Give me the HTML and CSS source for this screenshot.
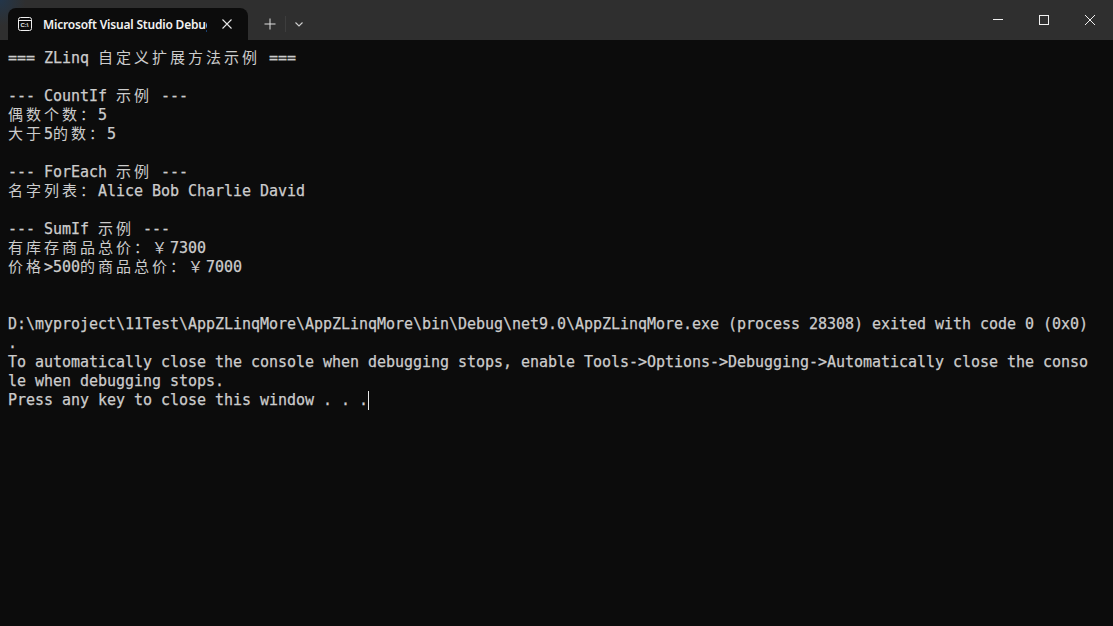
FILE: index.html
```html
<!DOCTYPE html>
<html lang="zh">
<head>
<meta charset="utf-8">
<title>Microsoft Visual Studio Debug Console</title>
<link rel="stylesheet" href="styles.css">
</head>
<body>
<div class="window">
  <header class="titlebar">
    <div class="tab">
      <svg class="tab-icon" width="16" height="16" viewBox="0 0 16 16" fill="none" stroke="#f0f0f0" stroke-width="1">
        <rect x="1.500" y="1.500" width="13" height="13" rx="2"/>
        <path d="M1.500 4.500h13"/>
        <text class="tab-icon-text" x="3.400" y="11.400">C:\</text>
      </svg>
      <span class="tab-title">Microsoft Visual Studio Debug Console</span>
      <svg class="tab-close" width="10" height="10" viewBox="0 0 10 10" stroke="#e6e6e6" stroke-width="1.100"><path d="M.5.5l9 9M9.500.5l-9 9"/></svg>
    </div>
    <div class="tab-actions">
      <svg class="new-tab" width="12" height="12" viewBox="0 0 12 12" stroke="#e0e0e0" stroke-width="1"><path d="M6 .5v11M.5 6h11"/></svg>
      <span class="divider"></span>
      <svg class="dropdown" width="8" height="5" viewBox="0 0 8 5" fill="none" stroke="#cfcfcf" stroke-width="1.100"><path d="M.5.5L4 4 7.500.5"/></svg>
    </div>
    <div class="window-controls">
      <span class="control"><svg width="10" height="10" viewBox="0 0 10 10" stroke="#f0f0f0" stroke-width="1"><path d="M0 4.500h10"/></svg></span>
      <span class="control"><svg width="10" height="10" viewBox="0 0 10 10" fill="none" stroke="#f0f0f0" stroke-width="1"><rect x=".5" y=".5" width="9" height="9"/></svg></span>
      <span class="control"><svg width="10" height="10" viewBox="0 0 10 10" stroke="#f0f0f0" stroke-width="1"><path d="M0 0l10 10M10 0L0 10"/></svg></span>
    </div>
  </header>
  <main class="console">
<div class="line">=== ZLinq <span class="cn">自定义扩展方法示例</span> ===</div>
<div class="line"></div>
<div class="line">--- CountIf <span class="cn">示例</span> ---</div>
<div class="line"><span class="cn">偶数个数：</span>5</div>
<div class="line"><span class="cn">大于</span>5<span class="cn">的数：</span>5</div>
<div class="line"></div>
<div class="line">--- ForEach <span class="cn">示例</span> ---</div>
<div class="line"><span class="cn">名字列表：</span>Alice Bob Charlie David</div>
<div class="line"></div>
<div class="line">--- SumIf <span class="cn">示例</span> ---</div>
<div class="line"><span class="cn">有库存商品总价：￥</span>7300</div>
<div class="line"><span class="cn">价格</span>&gt;500<span class="cn">的商品总价：￥</span>7000</div>
<div class="line"></div>
<div class="line"></div>
<div class="line">D:\myproject\11Test\AppZLinqMore\AppZLinqMore\bin\Debug\net9.0\AppZLinqMore.exe (process 28308) exited with code 0 (0x0)</div>
<div class="line">.</div>
<div class="line">To automatically close the console when debugging stops, enable Tools-&gt;Options-&gt;Debugging-&gt;Automatically close the conso</div>
<div class="line">le when debugging stops.</div>
<div class="line">Press any key to close this window . . .<span class="cursor"></span></div>
  </main>
</div>
</body>
</html>
```
FILE: styles.css
```css
* { box-sizing: border-box; }
html, body { margin: 0; padding: 0; height: 100%; background: #0c0c0c; overflow: hidden; }
.window { display: flex; flex-direction: column; width: 1113px; height: 626px; }
.titlebar {
  display: flex; align-items: flex-end; height: 40px; flex: none; padding-left: 8px;
  background: radial-gradient(circle 26px at 0 0, #23364a, #2f2f2f), #2f2f2f;
}
.tab {
  display: flex; align-items: center; width: 240px; height: 32px;
  background: #0c0c0c; border-radius: 8px 8px 0 0; padding: 0 16px 0 9px;
}
.tab-icon { flex: none; }
.tab-icon-text { font: 700 6px "Liberation Sans", sans-serif; fill: #f0f0f0; stroke: none; }
.tab-title {
  width: 164px; margin-left: 10px; margin-top: 2px; overflow: hidden; white-space: nowrap;
  font: 600 12px/16px "Noto Sans", "Open Sans", sans-serif; letter-spacing: -0.2px; color: #f2f2f2;
}
.tab-close { flex: none; margin-left: 15px; margin-bottom: 1px; }
.tab-actions { display: flex; align-items: center; height: 32px; padding-left: 16px; }
.new-tab { margin-right: 9px; margin-bottom: 1px; }
.divider { width: 1px; height: 16px; background: #3d3d3d; margin-right: 9px; }
.window-controls { display: flex; margin-left: auto; align-self: flex-start; }
.control { display: flex; align-items: center; justify-content: center; width: 46px; height: 40px; }
.console {
  flex: 1; padding: 9px 8px 0; color: #cccccc;
  font: 15px/19px "DejaVu Sans Mono", "Liberation Mono", "Noto Sans CJK SC", monospace;
  letter-spacing: -0.03px;
  -webkit-text-stroke: 0.25px #cccccc;
}
.line { height: 19px; white-space: pre; }
.cn { font-family: "Noto Sans CJK SC", sans-serif; letter-spacing: 3px; line-height: 0; -webkit-text-stroke: 0; }
.cursor { display: inline-block; width: 1px; height: 19px; background: #e8e8e8; vertical-align: top; }
```
